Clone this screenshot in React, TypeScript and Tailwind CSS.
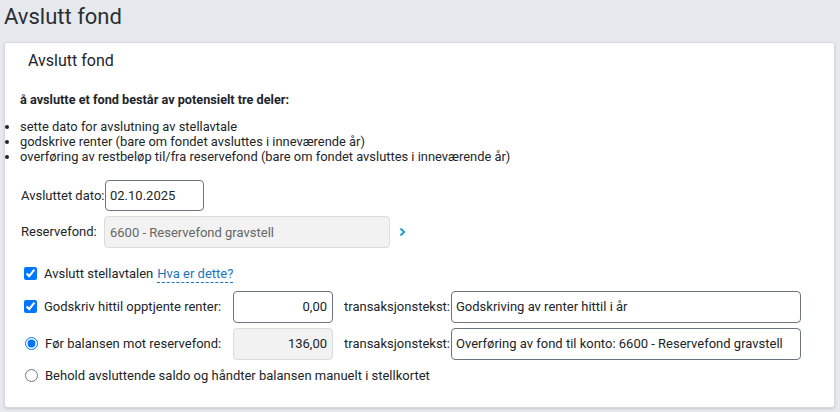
import React, { useState } from "react";

// Skjema for å avslutte et fond
export default function App() {
  const [dato, setDato] = useState("02.10.2025");
  const [avslutt, setAvslutt] = useState(true);
  const [godskriv, setGodskriv] = useState(true);
  const [modus, setModus] = useState<"reserve" | "manuelt">("reserve");
  const [renter, setRenter] = useState("0,00");
  const [tekst1, setTekst1] = useState("Godskriving av renter hittil i år");
  const [tekst2, setTekst2] = useState("Overføring av fond til konto: 6600 - Reservefond gravstell");

  return (
    <div className="min-h-screen bg-[#e6e9ee] font-['Roboto','Liberation_Sans',sans-serif] text-[#212529]">
      <h1 className="px-[4px] pt-[3px] text-[22px] leading-[28px] text-[#2b2f33]">Avslutt fond</h1>

      <div className="mt-[11px] ml-[4px] mr-[5px] h-[366px] rounded-[3px] border border-[#d6d8dc] bg-white shadow-sm">
        <h2 className="pl-[23px] pt-[8px] text-[16px] leading-[20px]">Avslutt fond</h2>

        <p className="mt-[21px] pl-[15px] text-[12.7px] font-bold leading-[16px]">
          å avslutte et fond består av potensielt tre deler:
        </p>

        <ul className="mt-[11px] ml-[-1px] list-disc pl-[16px] text-[12.9px] leading-[15px]">
          <li>sette dato for avslutning av stellavtale</li>
          <li>godskrive renter (bare om fondet avsluttes i inneværende år)</li>
          <li>overføring av restbeløp til/fra reservefond (bare om fondet avsluttes i inneværende år)</li>
        </ul>

        <div className="pl-[16px] text-[13px]">
          {/* Dato */}
          <div className="mt-[16px] flex items-center">
            <label className="w-[84px]">Avsluttet dato:</label>
            <input
              value={dato}
              onChange={(e) => setDato(e.target.value)}
              className="h-[31px] w-[99px] rounded-[4px] border border-[#6c757d] px-[4px] text-[13px] outline-none"
            />
          </div>

          {/* Reservefond */}
          <div className="mt-[5px] flex items-center">
            <label className="w-[83px]">Reservefond:</label>
            <input
              disabled
              value="6600 - Reservefond gravstell"
              className="h-[32px] w-[286px] rounded-[4px] border border-[#dcdcdc] bg-[#f2f2f2] px-[5px] text-[13px] text-[#666]"
            />
            <svg className="ml-[9px]" width="7" height="10" viewBox="0 0 7 10">
              <polyline points="1.5,1.5 5,5 1.5,8.5" fill="none" stroke="#2b9fd9" strokeWidth="2.2" />
            </svg>
          </div>

          {/* Avslutt stellavtalen */}
          <div className="mt-[16px] flex items-center">
            <input
              type="checkbox"
              checked={avslutt}
              onChange={(e) => setAvslutt(e.target.checked)}
              className="m-0 ml-[3px] h-[13px] w-[13px]"
            />
            <span className="ml-[7px]">Avslutt stellavtalen</span>
            <a href="#" className="ml-[4px] border-b border-dashed border-[#1b75bb] leading-[17px] text-[#1b75bb]">
              Hva er dette?
            </a>
          </div>

          {/* Godskriv */}
          <div className="mt-[7px] flex items-center">
            <input
              type="checkbox"
              checked={godskriv}
              onChange={(e) => setGodskriv(e.target.checked)}
              className="m-0 ml-[3px] h-[13px] w-[13px]"
            />
            <span className="ml-[7px] w-[189px]">Godskriv hittil opptjente renter:</span>
            <input
              value={renter}
              onChange={(e) => setRenter(e.target.value)}
              className="h-[32px] w-[100px] rounded-[4px] border border-[#6c757d] px-[5px] text-right text-[13px] outline-none"
            />
            <span className="ml-[11px] w-[107px]">transaksjonstekst:</span>
            <input
              value={tekst1}
              onChange={(e) => setTekst1(e.target.value)}
              className="h-[32px] w-[350px] rounded-[4px] border border-[#6c757d] px-[4px] text-[13px] outline-none"
            />
          </div>

          {/* Før balansen */}
          <div className="mt-[5px] flex items-center">
            <input
              type="radio"
              name="modus"
              checked={modus === "reserve"}
              onChange={() => setModus("reserve")}
              className="m-0 ml-[4px] h-[13px] w-[13px]"
            />
            <span className="ml-[7px] w-[188px]">Før balansen mot reservefond:</span>
            <input
              disabled
              value="136,00"
              className="h-[32px] w-[100px] rounded-[4px] border border-[#dcdcdc] bg-[#f2f2f2] px-[5px] text-right text-[13px] text-[#212529]"
            />
            <span className="ml-[11px] w-[107px]">transaksjonstekst:</span>
            <input
              value={tekst2}
              onChange={(e) => setTekst2(e.target.value)}
              className="h-[32px] w-[350px] rounded-[4px] border border-[#6c757d] px-[4px] text-[13px] outline-none"
            />
          </div>

          {/* Behold */}
          <div className="mt-[6px] flex items-center">
            <input
              type="radio"
              name="modus"
              checked={modus === "manuelt"}
              onChange={() => setModus("manuelt")}
              className="m-0 ml-[4px] h-[13px] w-[13px]"
            />
            <span className="ml-[7px]">Behold avsluttende saldo og håndter balansen manuelt i stellkortet</span>
          </div>
        </div>
      </div>
    </div>
  );
}
